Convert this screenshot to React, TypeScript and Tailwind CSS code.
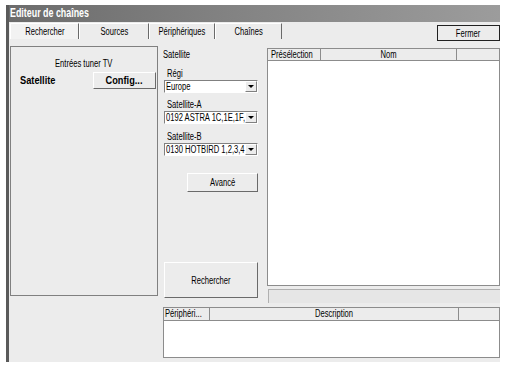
const font = "font-['Liberation_Sans',Arial,sans-serif]";

// the reference text is narrow, so labels get squeezed horizontally
const T = ({ children, left }: { children: string; left?: boolean }) => (
  <span className={`inline-block whitespace-nowrap scale-x-[0.76] ${left ? 'origin-left' : 'origin-center'}`}>{children}</span>
)

const B = ({ children }: { children: string }) => (
  <span className="inline-block whitespace-nowrap scale-x-[0.84] origin-center">{children}</span>
)

const Select = ({ value }: { value: string }) => (
  <div className="flex h-[13px] w-[94px] border border-t-[#808080] border-l-[#808080] border-b-white border-r-white bg-white">
    <div className="flex-1 overflow-hidden pl-[1px] leading-[11px]"><T left>{value}</T></div>
    <div className="flex w-[12px] items-center justify-center bg-[#ececec] border border-white border-r-[#808080] border-b-[#808080]">
      <div className="h-0 w-0 border-x-[3px] border-t-[3px] border-x-transparent border-t-black" />
    </div>
  </div>
)

const Button = ({ className, children }: { className: string; children: React.ReactNode }) => (
  <div className={`flex items-center justify-center bg-[#ececec] border border-t-white border-l-white border-b-[#6a6a6a] border-r-[#6a6a6a] ${className}`}>
    {children}
  </div>
)

const Tab = ({ label, w, active }: { label: string; w: string; active?: boolean }) => (
  <div className={`flex h-[16px] items-center justify-center border-t border-l border-r border-t-white border-l-white border-r-[#6a6a6a] ${w} ${active ? 'bg-[#f2f2f2]' : 'bg-[#ececec]'}`}>
    <T>{label}</T>
  </div>
)

const App = () => {
  return (
    <div className={`h-[365px] w-[507px] bg-white pl-[6px] pr-[7px] pt-[5px] pb-[3px] text-[10px] text-black ${font}`}>
      <div className="flex h-full flex-col border-l-[3px] border-[#5a5a5a]">
        <div className="h-[17px] bg-gradient-to-r from-[#6c6c6c] via-[#858585] to-[#9c9c9c] pl-[1px] text-[12px] font-bold leading-[17px] text-white">
          <span className="inline-block origin-left scale-x-[0.74] whitespace-nowrap">Editeur de chaînes</span>
        </div>
        <div className="flex flex-1 flex-col bg-[#ececec] pl-[1px]">
          <div className="mt-[1px] flex h-[18px] items-start">
            <Tab label="Rechercher" w="w-[69px]" active />
            <Tab label="Sources" w="w-[70px]" />
            <Tab label="Périphériques" w="w-[66px]" />
            <Tab label="Chaînes" w="w-[67px]" />
            <div className="flex-1" />
            <div className="mt-[2px] flex h-[16px] w-[63px] items-center justify-center border border-[#202020] bg-[#ececec]">
              <T>Fermer</T>
            </div>
          </div>

          <div className="mt-[5px] flex">
            {/* left tuner group */}
            <div className="flex h-[250px] w-[148px] flex-col border border-[#808080]">
              <div className="mt-[9px] text-center"><T>Entrées tuner TV</T></div>
              <div className="mt-[1px] flex items-center justify-between pl-[9px] pr-[1px]">
                <span className="inline-block origin-left scale-x-[0.84] text-[11px] font-bold">Satellite</span>
                <Button className="h-[17px] w-[63px] text-[11px] font-bold"><B>Config...</B></Button>
              </div>
            </div>

            {/* right part */}
            <div className="ml-[5px] flex w-[338px] flex-col">
              <div className="flex h-[257px]">
                <div className="flex w-[96px] flex-col">
                  <div className="mt-[1px]"><T left>Satellite</T></div>
                  <div className="ml-[4px] mt-[7px] leading-[10px]"><T left>Régi</T></div>
                  <div className="ml-[1px] mt-[1px]"><Select value="Europe" /></div>
                  <div className="ml-[4px] mt-[7px] leading-[10px]"><T left>Satellite-A</T></div>
                  <div className="ml-[1px] mt-[1px]"><Select value="0192 ASTRA 1C,1E,1F," /></div>
                  <div className="ml-[4px] mt-[8px] leading-[10px]"><T left>Satellite-B</T></div>
                  <div className="ml-[1px] mt-[1px]"><Select value="0130 HOTBIRD 1,2,3,4" /></div>
                  <Button className="ml-[24px] mt-[17px] h-[19px] w-[71px]"><T>Avancé</T></Button>
                  <div className="flex-1" />
                  <Button className="mb-[5px] ml-[1px] h-[36px] w-[94px]"><T>Rechercher</T></Button>
                </div>
                <div className="ml-[8px] flex flex-1 flex-col">
                  <div className="mt-[2px] flex h-[239px] flex-col border border-[#8c8c8c] bg-white">
                    <div className="flex h-[12px] border-b border-[#8c8c8c] bg-[#ececec] leading-[11px]">
                      <div className="w-[53px] border-r border-[#8c8c8c] pl-[3px]"><T left>Présélection</T></div>
                      <div className="w-[136px] border-r border-[#8c8c8c] text-center"><T>Nom</T></div>
                      <div className="flex-1" />
                    </div>
                  </div>
                  <div className="ml-[1px] mt-[3px] h-[14px] border-t border-l border-[#b0b0b0] bg-[#e6e6e6]" />
                </div>
              </div>
              <div className="mt-[4px] flex h-[51px] flex-col border border-[#8c8c8c] bg-white">
                <div className="flex h-[13px] border-b border-[#8c8c8c] bg-[#ececec] leading-[12px]">
                  <div className="w-[46px] border-r border-[#8c8c8c] pl-[1px]"><T left>Périphéri...</T></div>
                  <div className="w-[249px] border-r border-[#8c8c8c] text-center"><T>Description</T></div>
                  <div className="flex-1" />
                </div>
              </div>
            </div>
          </div>
        </div>
      </div>
    </div>
  )
}

export default App
